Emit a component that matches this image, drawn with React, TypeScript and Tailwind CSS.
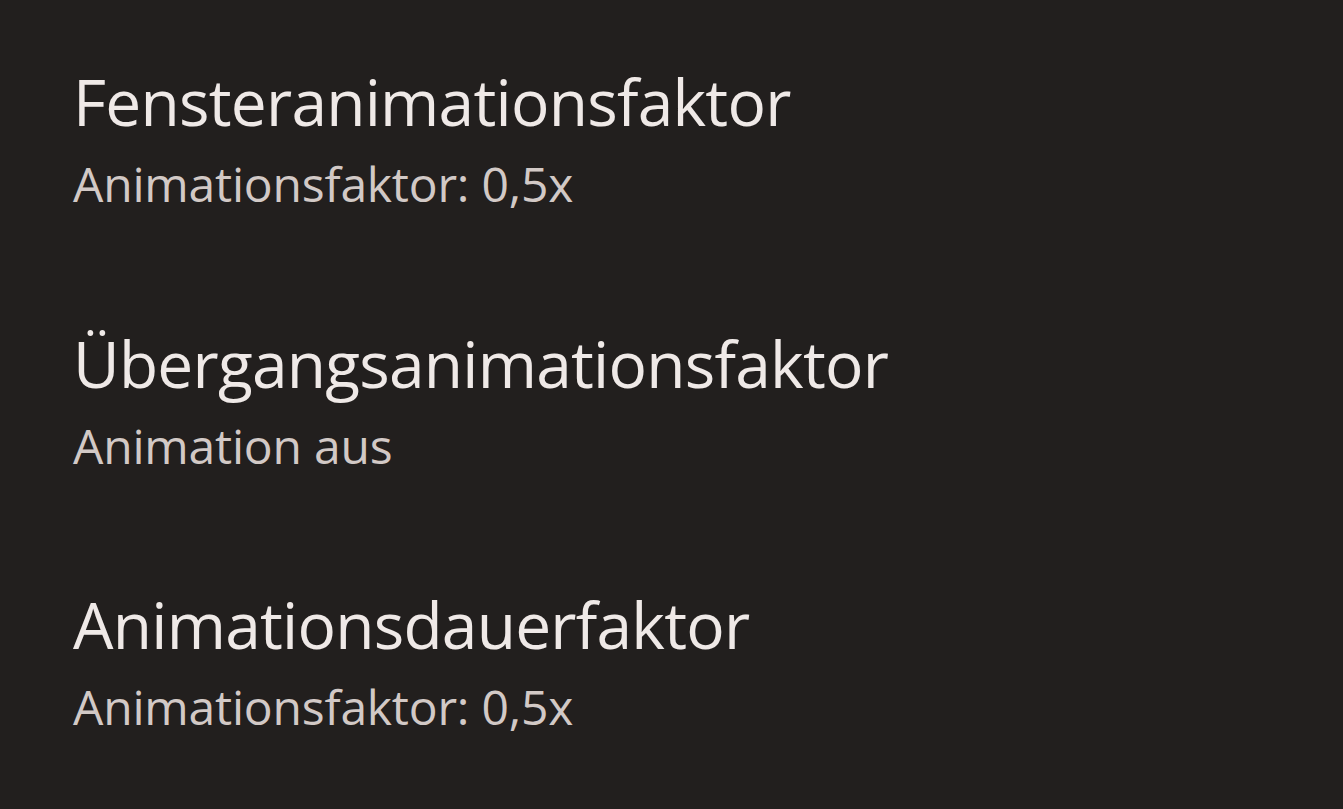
import React from 'react';

const items = [
  { title: 'Fensteranimationsfaktor', summary: 'Animationsfaktor: 0,5x' },
  { title: 'Übergangsanimationsfaktor', summary: 'Animation aus' },
  { title: 'Animationsdauerfaktor', summary: 'Animationsfaktor: 0,5x' },
];

const App: React.FC = () => {
  return (
    <div
      className="min-h-screen w-full bg-[#221f1e] pl-[73px] pt-[62px]"
      style={{ fontFamily: '"Open Sans", "Liberation Sans", sans-serif' }}
    >
      <div className="flex flex-col">
        {items.map((item) => (
          <div key={item.title} className="flex h-[261.5px] flex-col">
            <div className="text-[64px] leading-[80px] tracking-[-0.75px] text-[#efe9e7]">{item.title}</div>
            <div className="mt-[12px] text-[48px] leading-[60px] tracking-[-0.2px] text-[#d2c9c6]">
              {item.summary}
            </div>
          </div>
        ))}
      </div>
    </div>
  );
};

export default App;
